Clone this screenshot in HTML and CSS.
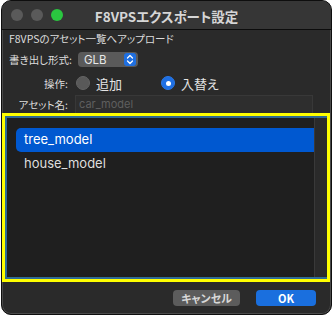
FILE: index.html
```html
<!DOCTYPE html>
<html lang="ja">
<head>
    <meta charset="UTF-8">
    <title>F8VPSエクスポート設定</title>
    <link rel="stylesheet" href="styles.css">
</head>
<body>
    <div class="window">
        <div class="titlebar">
            <div class="lights">
                <span class="light"></span>
                <span class="light"></span>
                <span class="light light-green"></span>
            </div>
            <div class="title">F8VPSエクスポート設定</div>
        </div>

        <div class="content">
            <p class="upload-label">F8VPSのアセット一覧へアップロード</p>

            <div class="form-row row-format">
                <span class="form-label">書き出し形式:</span>
                <div class="popup">
                    <span>GLB</span>
                    <span class="stepper">
                        <svg width="8" height="11" viewBox="0 0 8 11">
                            <path d="M1.5 4 L4 1.5 L6.5 4 M1.5 7 L4 9.5 L6.5 7" fill="none" stroke="#fff" stroke-width="1.3" stroke-linecap="round" stroke-linejoin="round"/>
                        </svg>
                    </span>
                </div>
            </div>

            <div class="form-row row-mode">
                <span class="form-label">操作:</span>
                <label class="radio">
                    <span class="radio-dot"></span>
                    <span>追加</span>
                </label>
                <label class="radio radio-on">
                    <span class="radio-dot"></span>
                    <span>入替え</span>
                </label>
            </div>

            <div class="form-row row-name">
                <span class="form-label">アセット名:</span>
                <div class="field">car_model</div>
            </div>

            <div class="list-frame">
                <div class="list-ring">
                    <div class="list">
                        <div class="list-item selected">tree_model</div>
                        <div class="list-item">house_model</div>
                    </div>
                    <div class="scroll-col"></div>
                </div>
            </div>

            <div class="buttons">
                <button class="btn btn-cancel">キャンセル</button>
                <button class="btn btn-ok">OK</button>
            </div>
        </div>
    </div>
</body>
</html>
```

FILE: styles.css
```css
body {
    margin: 0;
    background-color: #ffffff;
    font-family: "Noto Sans CJK JP", "Inter", sans-serif;
    font-feature-settings: "palt";
}

.window {
    width: 329px;
    height: 313px;
    margin-left: 1px;
    border: 1px solid #0e0e0e;
    border-radius: 10px;
    background-color: #2a2a2a;
    overflow: hidden;
    box-shadow: inset 0 0 0 1px #4a4a4a;
}

.titlebar {
    position: relative;
    height: 28px;
    background-color: #363636;
    border-bottom: 1px solid #0c0c0c;
    display: flex;
    align-items: center;
    justify-content: center;
}

.lights {
    position: absolute;
    left: 9px;
    top: 8px;
    display: flex;
    gap: 8px;
}

.light {
    width: 12px;
    height: 12px;
    border-radius: 50%;
    background-color: #5a5a5a;
}

.light-green {
    background-color: #2ac740;
}

.title {
    font-size: 13.5px;
    font-weight: bold;
    color: #d6d6d6;
    margin-top: 1px;
}

.content {
    display: flex;
    flex-direction: column;
}

.upload-label {
    margin: 0;
    height: 18px;
    line-height: 18px;
    padding-left: 7px;
    font-size: 10.5px;
    color: #dcdcdc;
}

.form-row {
    display: flex;
    align-items: center;
}

.form-label {
    width: 59px;
    padding-left: 7px;
    text-align: right;
    font-size: 10.5px;
    color: #dcdcdc;
    white-space: nowrap;
}

.row-format {
    margin-top: 4px;
    height: 15px;
}

.popup {
    margin-left: 10px;
    width: 60px;
    height: 15px;
    border-radius: 4px;
    background-color: #5a5a5a;
    display: flex;
    align-items: center;
    justify-content: space-between;
    padding: 0 2px 0 6px;
    box-sizing: border-box;
    font-family: "Inter", sans-serif;
    font-size: 11.5px;
    color: #e8e8e8;
}

.stepper {
    width: 12px;
    height: 13px;
    border-radius: 3px;
    background-color: #1f6fe0;
    display: flex;
    align-items: center;
    justify-content: center;
}

.row-mode {
    margin-top: 9px;
    height: 14px;
}

.radio {
    display: flex;
    align-items: center;
    gap: 6px;
    margin-left: 8px;
    font-size: 13px;
    color: #e4e4e4;
}

.radio + .radio {
    margin-left: 39px;
}

.radio-dot {
    width: 14px;
    height: 14px;
    border-radius: 50%;
    background-color: #595959;
    box-sizing: border-box;
    border: 1px solid #646464;
    display: flex;
    align-items: center;
    justify-content: center;
}

.radio-on .radio-dot {
    background-color: #1e6fe3;
    border-color: #2a78e6;
}

.radio-on .radio-dot::after {
    content: "";
    width: 5px;
    height: 5px;
    border-radius: 50%;
    background-color: #ffffff;
}

.row-name {
    margin-top: 5px;
    height: 18px;
}

.field {
    margin-left: 7px;
    width: 238px;
    height: 18px;
    box-sizing: border-box;
    border: 1px solid #383838;
    border-bottom: none;
    background-color: #2e2e2e;
    padding-left: 3px;
    line-height: 17px;
    font-family: "Inter", sans-serif;
    font-size: 11px;
    color: #5f5f5f;
}

.list-frame {
    margin-right: 1px;
    height: 169px;
    box-sizing: border-box;
    border: 3px solid #ffff00;
}

.list-ring {
    height: 100%;
    box-sizing: border-box;
    border: 2px solid #2f6b94;
    border-right: none;
    display: flex;
}

.list {
    flex: 1;
    background-color: #1f1f1f;
    padding-top: 10px;
    padding-left: 9px;
}

.list-item {
    height: 24px;
    line-height: 23px;
    padding-left: 8px;
    font-family: "Inter", sans-serif;
    font-size: 13px;
    color: #dedede;
}

.list-item.selected {
    background-color: #0058d0;
    border-radius: 5px 0 0 5px;
    color: #ffffff;
}

.scroll-col {
    width: 12px;
    background-color: #2a2a2a;
    border-left: 1px solid #393939;
}

.buttons {
    display: flex;
    justify-content: flex-end;
    gap: 16px;
    margin-top: 8px;
    padding-right: 15px;
}

.btn {
    height: 16px;
    border: 0;
    border-radius: 4px;
    padding: 0;
    font-family: "Noto Sans CJK JP", "Inter", sans-serif;
    font-feature-settings: "palt";
    font-size: 11px;
    font-weight: bold;
    line-height: 16px;
}

.btn-cancel {
    width: 67px;
    background-color: #5c5c5c;
    color: #d8d8d8;
}

.btn-ok {
    width: 60px;
    background-color: #1a6fde;
    color: #ffffff;
}
```
